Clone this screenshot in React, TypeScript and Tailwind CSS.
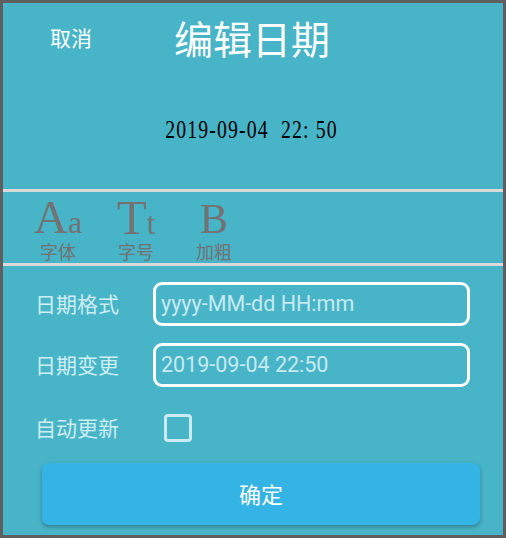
import { useState } from 'react'

const cjk = '"Noto Sans CJK SC", "Noto Sans", sans-serif'

// 工具栏按钮
function ToolItem({ icon, label }: { icon: React.ReactNode; label: string }) {
  return (
    <div className="w-[78px] flex flex-col items-center text-[#727272]">
      <div className="h-[45px] flex items-end" style={{ fontFamily: '"Liberation Serif", serif' }}>
        <div className="flex items-baseline leading-[0.8]">{icon}</div>
      </div>
      <span className="text-[18px] leading-[18px] mt-[5px]">{label}</span>
    </div>
  )
}

export default function App() {
  const [auto, setAuto] = useState(false)

  return (
    <div className="w-[506px] h-[538px] bg-[#5f5f5f] pt-[3px] px-[3px] overflow-hidden" style={{ fontFamily: cjk }}>
      <div className="w-[500px] h-[532px] bg-[#48b4c8] flex flex-col">
        {/* Header */}
        <div className="h-[186px] flex flex-col">
          <div className="flex items-center h-[50px] mt-[9px]">
            <button className="ml-[47px] text-white text-[21px] leading-none">取消</button>
            <h1 className="ml-[82px] text-white text-[39px] leading-none">编辑日期</h1>
          </div>
          <div className="flex justify-center mt-[55px] pr-[2px]">
            <span
              className="inline-block text-black text-[26px] leading-none scale-x-[0.76] tracking-[1.5px] whitespace-pre"
              style={{ fontFamily: '"Liberation Serif", serif' }}
            >
              2019-09-04  22: 50
            </span>
          </div>
        </div>
        <div className="h-[3px] bg-[#d9d9d9]" />

        {/* Toolbar */}
        <div className="h-[71px] flex px-[16px]">
          <ToolItem
            label="字体"
            icon={
              <>
                <span className="text-[47px]">A</span>
                <span className="text-[32px]">a</span>
              </>
            }
          />
          <ToolItem
            label="字号"
            icon={
              <>
                <span className="text-[49px]">T</span>
                <span className="text-[31px]">t</span>
              </>
            }
          />
          <ToolItem label="加粗" icon={<span className="text-[42px]">B</span>} />
        </div>
        <div className="h-[3px] bg-[#d9d9d9]" />

        {/* Form */}
        <div className="flex flex-col pt-[16px] px-[32px]">
          <div className="flex items-center">
            <span className="w-[118px] text-[21px] text-[#cdeef3]">日期格式</span>
            <div className="w-[317px] h-[44px] border-[3px] border-white rounded-[9px] flex items-center px-[5px]">
              <span className="text-[21.5px] text-[#c6eaf0]" style={{ fontFamily: 'Roboto, sans-serif' }}>
                yyyy-MM-dd HH:mm
              </span>
            </div>
          </div>
          <div className="flex items-center mt-[17px]">
            <span className="w-[118px] text-[21px] text-[#cdeef3]">日期变更</span>
            <div className="w-[317px] h-[44px] border-[3px] border-white rounded-[9px] flex items-center px-[5px]">
              <span className="text-[21.5px] text-[#c6eaf0]" style={{ fontFamily: 'Roboto, sans-serif' }}>
                2019-09-04 22:50
              </span>
            </div>
          </div>
          <div className="flex items-center mt-[25px]">
            <span className="w-[129px] text-[21px] text-[#cdeef3]">自动更新</span>
            <button
              onClick={() => setAuto(!auto)}
              className="w-[28px] h-[28px] border-[3px] border-[#c9ebf1] rounded-[4px]"
            />
          </div>
        </div>

        <div className="px-[39px] mt-[19px]">
          <button className="w-[438px] h-[62px] bg-[#33b4e4] rounded-[7px] text-white text-[22px] shadow-[0_2px_4px_rgba(0,0,0,0.3)]">
            确定
          </button>
        </div>
      </div>
    </div>
  )
}
